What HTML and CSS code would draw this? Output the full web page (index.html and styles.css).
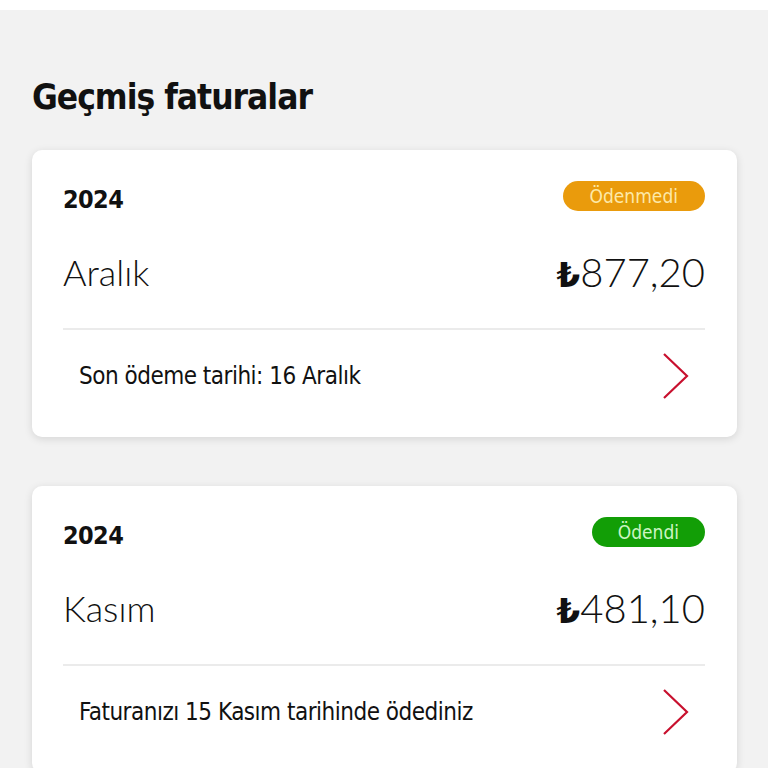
FILE: index.html
```html
<!DOCTYPE html>
<html lang="tr">
<head>
  <meta charset="UTF-8" />
  <title>Geçmiş faturalar</title>
  <meta name="viewport" content="width=device-width, initial-scale=1" />
  <link rel="stylesheet" href="styles.css">
</head>
<body>
  <div class="topbar"></div>
  <main class="page">
    <h1 class="title">Geçmiş faturalar</h1>

    <div class="card">
      <div class="card-head">
        <span class="year">2024</span>
        <span class="badge badge-unpaid">Ödenmedi</span>
      </div>
      <div class="card-main">
        <span class="month">Aralık</span>
        <span class="amount"><span class="lira">₺</span>877,20</span>
      </div>
      <div class="card-foot">
        <span class="note">Son ödeme tarihi: 16 Aralık</span>
        <svg class="chevron" width="30" height="48" viewBox="0 0 30 48"><path d="M3 2 L26 24 L3 46" fill="none" stroke="#c8102e" stroke-width="2.2"/></svg>
      </div>
    </div>

    <div class="card">
      <div class="card-head">
        <span class="year">2024</span>
        <span class="badge badge-paid">Ödendi</span>
      </div>
      <div class="card-main">
        <span class="month">Kasım</span>
        <span class="amount"><span class="lira">₺</span>481,10</span>
      </div>
      <div class="card-foot">
        <span class="note">Faturanızı 15 Kasım tarihinde ödediniz</span>
        <svg class="chevron" width="30" height="48" viewBox="0 0 30 48"><path d="M3 2 L26 24 L3 46" fill="none" stroke="#c8102e" stroke-width="2.2"/></svg>
      </div>
    </div>
  </main>
</body>
</html>
```

FILE: styles.css
```css
body {
  margin: 0;
  background: #f2f2f2;
  font-family: "DejaVu Sans Condensed", "DejaVu Sans", sans-serif;
  color: #111;
  overflow: hidden;
}
.topbar {
  height: 10px;
  background: #fff;
}
.page {
  padding: 0 31px 0 32px;
}
.title {
  margin: 65px 0 31px;
  font-size: 35px;
  font-weight: bold;
  line-height: 44px;
  letter-spacing: -1px;
}
.card {
  background: #fff;
  border-radius: 10px;
  box-shadow: 0 2px 8px rgba(0,0,0,0.12);
  padding: 33px 32px 0 31px;
  margin-bottom: 49px;
}
.card-head {
  display: flex;
  justify-content: space-between;
  align-items: center;
  height: 32px;
}
.year {
  font-size: 25px;
  font-weight: bold;
  letter-spacing: -0.6px;
}
.badge {
  align-self: flex-start;
  margin-top: -2px;
  border-radius: 15px;
  height: 30px;
  line-height: 30px;
  padding: 0 27px;
  font-size: 19px;
}
.badge-unpaid {
  background: #ea9b0c;
  color: #fde9a8;
}
.badge-paid {
  background: #129e06;
  color: #cdf5c4;
  padding: 0 26px;
}
.card-main {
  display: flex;
  justify-content: space-between;
  align-items: center;
  box-sizing: border-box;
  height: 115px;
  padding-top: 15px;
  padding-bottom: 14px;
  border-bottom: 2px solid #ebebeb;
}
.month {
  font-family: Lato, sans-serif;
  font-weight: 300;
  font-size: 36px;
}
.amount {
  font-family: Lato, sans-serif;
  font-weight: 300;
  font-size: 40px;
}
.lira {
  font-family: "DejaVu Sans", sans-serif;
  font-weight: bold;
  font-size: 34px;
}
.card-foot {
  display: flex;
  justify-content: space-between;
  align-items: center;
  height: 107px;
  padding-left: 16px;
  padding-right: 14px;
  padding-bottom: 15px;
  box-sizing: border-box;
}
.note {
  font-size: 24px;
  letter-spacing: -0.5px;
}
```
